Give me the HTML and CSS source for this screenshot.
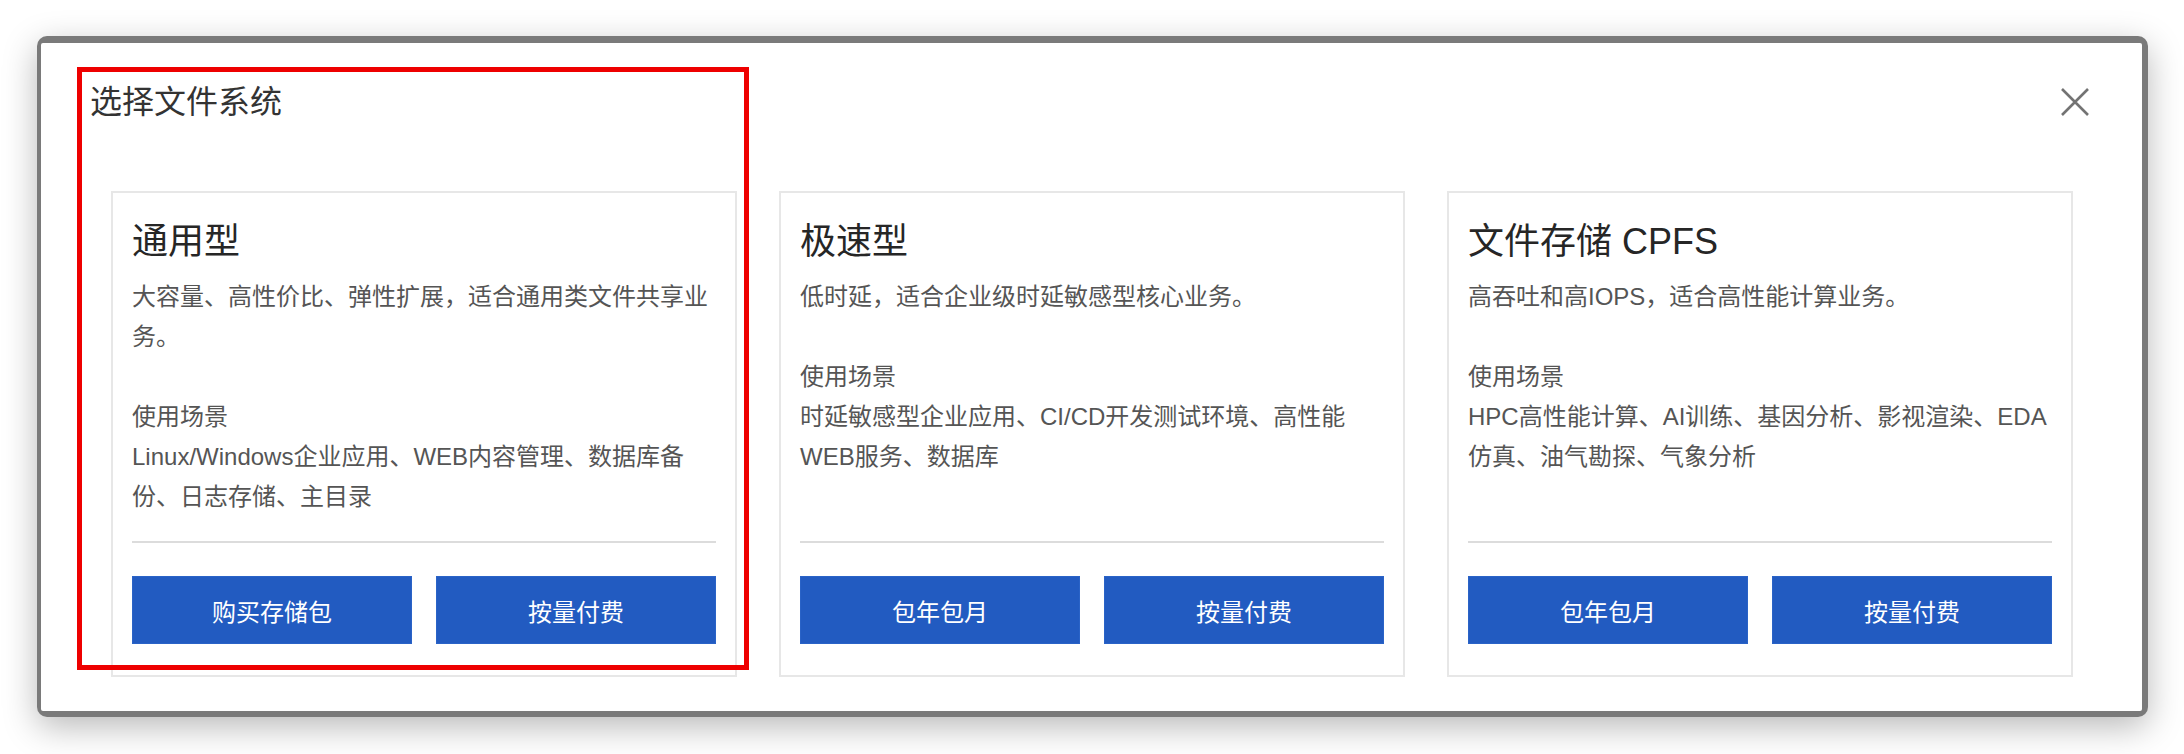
FILE: index.html
```html
<!DOCTYPE html>
<html lang="zh-CN">
<head>
<meta charset="utf-8">
<title>选择文件系统</title>
<link rel="stylesheet" href="styles.css">
</head>
<body>
<div class="stage">
  <div class="frame">
    <div class="dialog">
      <h1 class="title">选择文件系统</h1>
      <button class="close" aria-label="关闭">
        <svg width="30" height="30" viewBox="0 0 30 30"><path d="M2 2 L28 28 M28 2 L2 28" stroke="#737373" stroke-width="2.6" fill="none"/></svg>
      </button>
      <div class="cards">
        <div class="card">
          <h2 class="card-title">通用型</h2>
          <div class="card-body">
            <p class="desc">大容量、高性价比、弹性扩展，适合通用类文件共享业务。</p>
            <p class="label">使用场景</p>
            <p class="scene">Linux/Windows企业应用、WEB内容管理、数据库备份、日志存储、主目录</p>
          </div>
          <div class="divider"></div>
          <div class="actions">
            <button class="btn">购买存储包</button>
            <button class="btn">按量付费</button>
          </div>
        </div>
        <div class="card">
          <h2 class="card-title">极速型</h2>
          <div class="card-body">
            <p class="desc">低时延，适合企业级时延敏感型核心业务。</p>
            <p class="label">使用场景</p>
            <p class="scene">时延敏感型企业应用、CI/CD开发测试环境、高性能WEB服务、数据库</p>
          </div>
          <div class="divider"></div>
          <div class="actions">
            <button class="btn">包年包月</button>
            <button class="btn">按量付费</button>
          </div>
        </div>
        <div class="card">
          <h2 class="card-title">文件存储 CPFS</h2>
          <div class="card-body">
            <p class="desc">高吞吐和高IOPS，适合高性能计算业务。</p>
            <p class="label">使用场景</p>
            <p class="scene">HPC高性能计算、AI训练、基因分析、影视渲染、EDA仿真、油气勘探、气象分析</p>
          </div>
          <div class="divider"></div>
          <div class="actions">
            <button class="btn">包年包月</button>
            <button class="btn">按量付费</button>
          </div>
        </div>
      </div>
      <div class="highlight"></div>
    </div>
  </div>
</div>
</body>
</html>
```

FILE: styles.css
```css
* { box-sizing: border-box; }

html, body {
  margin: 0;
  padding: 0;
  background: #ffffff;
}

body {
  font-family: "Liberation Sans", "Noto Sans CJK SC", sans-serif;
  width: 2184px;
  height: 754px;
  overflow: hidden;
}

.stage {
  padding: 36px 36px 0 37px;
}

.frame {
  width: 2111px;
  background: #7a7a7a;
  border-radius: 10px;
  padding: 7px 6px 6px 4px;
  box-shadow: 0 10px 34px rgba(0, 0, 0, 0.28);
}

.dialog {
  position: relative;
  background: #ffffff;
  border-radius: 2px;
  padding: 37px 69px 34px 70px;
}

.title {
  margin: 0 0 67px -21px;
  font-size: 32px;
  line-height: 44px;
  font-weight: normal;
  color: #333333;
}

.close {
  position: absolute;
  top: 44px;
  right: 52px;
  width: 30px;
  height: 30px;
  padding: 0;
  border: 0;
  background: transparent;
  display: flex;
}

.cards {
  display: grid;
  grid-template-columns: repeat(3, 1fr);
  gap: 42px;
}

.card {
  display: flex;
  flex-direction: column;
  border: 2px solid #e7e7e7;
  padding: 24px 19px 31px;
  background: #fff;
}

.card-title {
  margin: 0 0 10px;
  font-size: 36px;
  line-height: 50px;
  font-weight: normal;
  color: #262626;
}

.card-body {
  flex: 1;
  font-size: 24px;
  line-height: 40px;
  color: #555555;
}

.card-body p {
  margin: 0;
}

.card-body .desc {
  margin-bottom: 40px;
}

.divider {
  height: 2px;
  background: #dcdcdc;
  margin-top: 24px;
}

.actions {
  display: grid;
  grid-template-columns: 1fr 1fr;
  gap: 24px;
  margin-top: 33px;
}

.btn {
  height: 68px;
  border: 1px solid #2a63c7;
  background: #225bc1;
  color: #ffffff;
  font-family: "Liberation Sans", "Noto Sans CJK SC", sans-serif;
  font-size: 24px;
  padding: 0;
}

.highlight {
  position: absolute;
  left: 36px;
  top: 24px;
  width: 672px;
  height: 603px;
  border: 5px solid #ee0000;
  pointer-events: none;
}
```
